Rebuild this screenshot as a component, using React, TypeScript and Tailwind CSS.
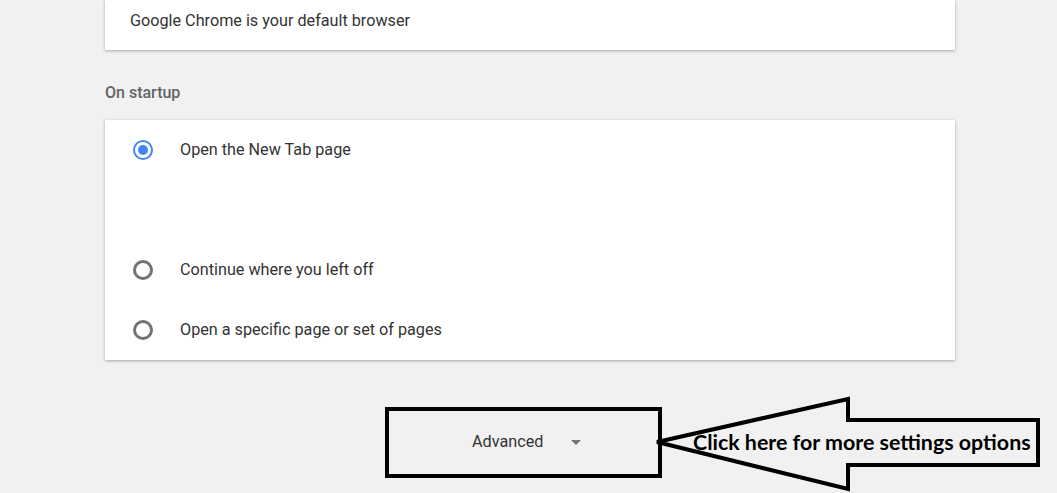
import React from "react";

function Radio({ checked }: { checked?: boolean }) {
  return checked ? (
    <div className="w-[20px] h-[20px] rounded-full border-[2.5px] border-[#4285f4] flex items-center justify-center shrink-0">
      <div className="w-[10px] h-[10px] rounded-full bg-[#4285f4]" />
    </div>
  ) : (
    <div className="w-[20px] h-[20px] rounded-full border-[3px] border-[#737373] shrink-0" />
  );
}

function Row({ label, checked }: { label: string; checked?: boolean }) {
  return (
    <div className="h-[60px] flex items-center pl-[28px] gap-[27px]">
      <Radio checked={checked} />
      <span className="text-[16.2px] text-[#333333]">{label}</span>
    </div>
  );
}

export default function App() {
  return (
    <div
      className="relative w-[1057px] h-[493px] bg-[#f1f1f1] overflow-hidden"
      style={{ fontFamily: "Roboto, 'Noto Sans', sans-serif" }}
    >
      <div className="ml-[105px] w-[850px] flex flex-col">
        <div className="h-[50px] bg-white shadow-[0_1px_3px_rgba(0,0,0,0.3)] pl-[25px] pt-[9px]">
          <span className="text-[16.2px] leading-[20px] text-[#333333]">
            Google Chrome is your default browser
          </span>
        </div>
        <div className="mt-[33px] mb-[17px] h-[20px] leading-[20px] text-[16px] font-medium text-[#646464]">
          On startup
        </div>
        <div className="bg-white shadow-[0_1px_3px_rgba(0,0,0,0.3)] flex flex-col">
          <Row label="Open the New Tab page" checked />
          <div className="h-[60px]" />
          <Row label="Continue where you left off" />
          <Row label="Open a specific page or set of pages" />
        </div>
        <div className="mt-[47px] ml-[280px] w-[277px] h-[71px] border-4 border-black flex items-center pl-[83px]">
          <span className="text-[16.2px] text-[#333333]">Advanced</span>
          <svg className="ml-[28px]" width="10" height="5" viewBox="0 0 10 5">
            <path d="M0 0 L10 0 L5 5 Z" fill="#757575" />
          </svg>
        </div>
      </div>

      <div className="absolute left-[650px] top-[392px] w-[400px] h-[101px]">
        <svg className="absolute inset-0" width="400" height="101" viewBox="0 0 400 101">
          <polygon
            points="7,50 198,7 198,28 388,28 388,73 198,73 198,97"
            fill="none"
            stroke="#000"
            strokeWidth="4"
            strokeLinejoin="miter"
          />
        </svg>
        <span
          className="absolute left-[43px] top-[36px] text-[21.4px] leading-[28px] font-bold text-black whitespace-nowrap"
          style={{ fontFamily: "Lato, 'Open Sans', sans-serif" }}
        >
          Click here for more settings options
        </span>
      </div>
    </div>
  );
}
